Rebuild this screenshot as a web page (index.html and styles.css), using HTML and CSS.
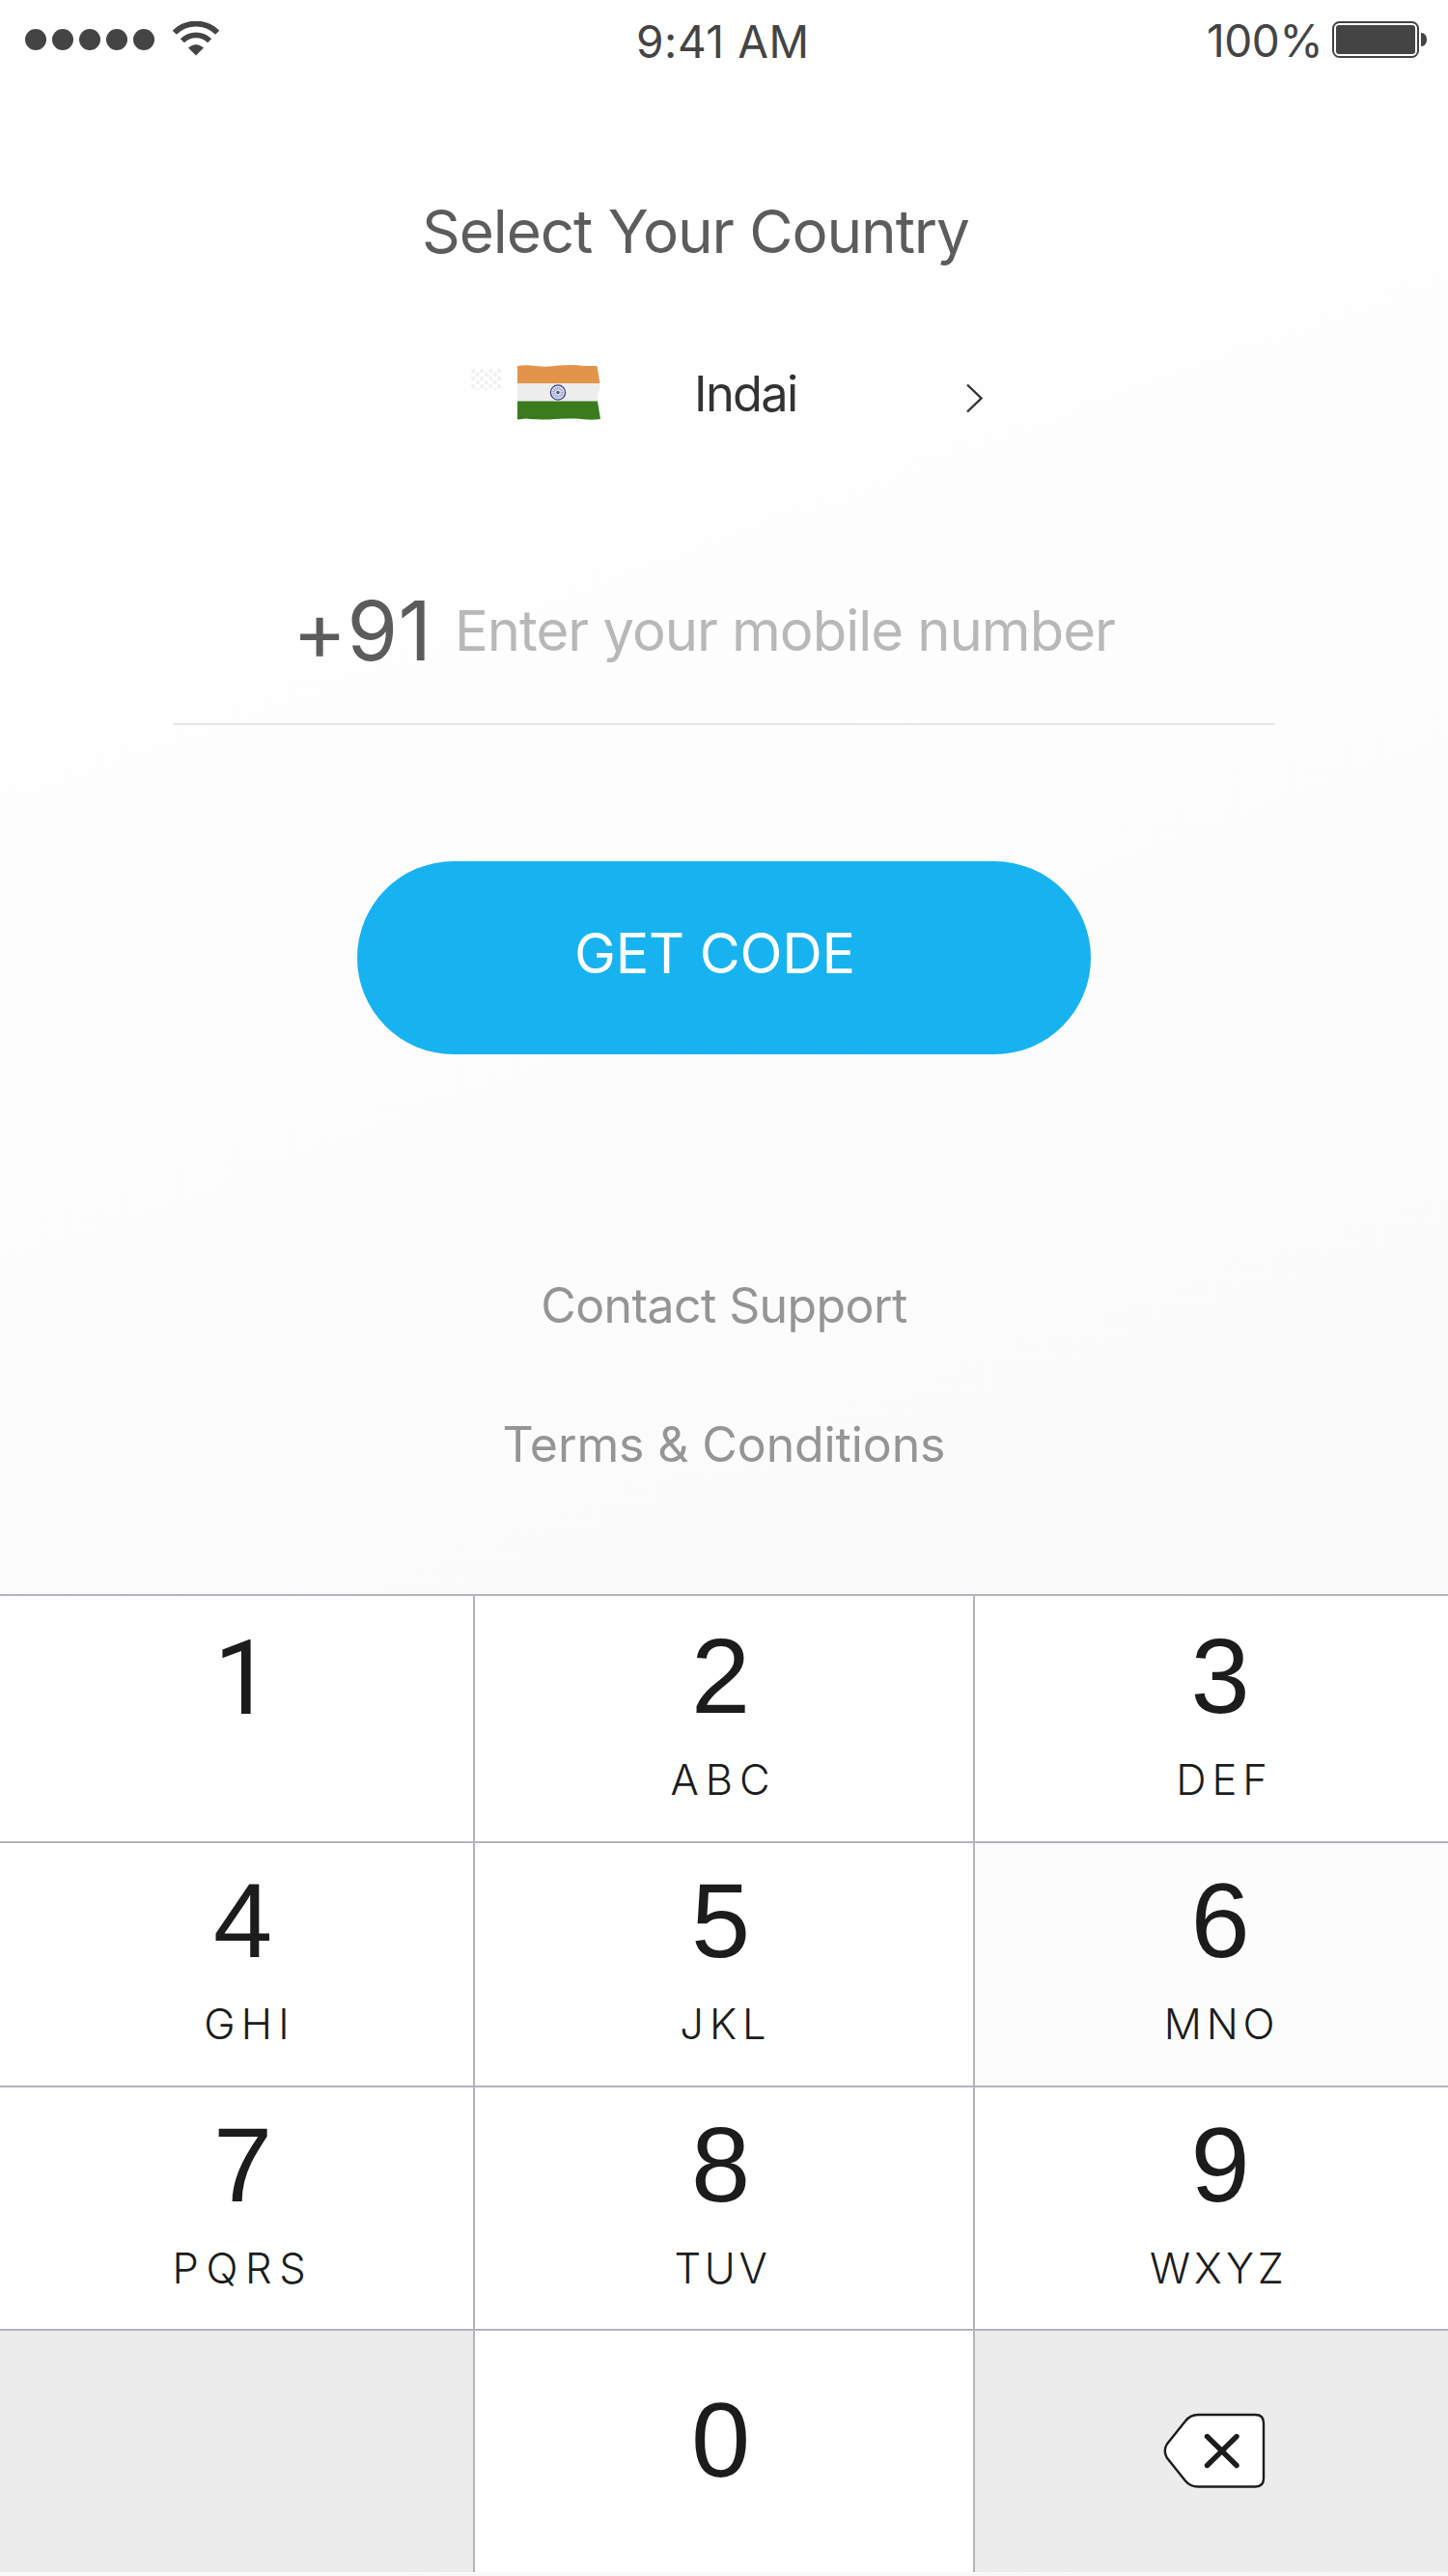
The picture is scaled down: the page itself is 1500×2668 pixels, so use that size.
FILE: index.html
```
<!DOCTYPE html>
<html lang="en">
<head>
<meta charset="utf-8">
<title>Select Your Country</title>
<link rel="stylesheet" href="styles.css">
</head>
<body>
<div class="screen">
  <header class="status">
    <div class="status-left">
      <svg class="signal" width="134" height="22" viewBox="0 0 134 22" fill="#444"><circle cx="11" cy="11" r="11"/><circle cx="39" cy="11" r="11"/><circle cx="67" cy="11" r="11"/><circle cx="95" cy="11" r="11"/><circle cx="123" cy="11" r="11"/></svg>
      <svg class="wifi" width="48" height="36" viewBox="0 0 48 36"><path d="M1.8 11.7A31.5 31.5 0 0 1 46.2 11.7" fill="none" stroke="#444" stroke-width="5.8"/><path d="M9.9 20.2A20 20 0 0 1 38.100 20.2" fill="none" stroke="#444" stroke-width="5.8"/><path d="M16 27.600Q24 20.600 32 27.600L24 35.600Z" fill="#444"/></svg>
    </div>
    <div class="time">9:41 AM</div>
    <div class="status-right">
      <span class="percent">100%</span>
      <svg class="battery" width="98" height="38" viewBox="0 0 98 38"><rect x="1" y="1" width="88" height="36" rx="6.500" fill="none" stroke="#444" stroke-width="2"/><rect x="4" y="4" width="82" height="30" rx="3" fill="#444"/><path d="M92 12c8 0 8 14 0 14Z" fill="#444"/></svg>
    </div>
  </header>

  <main class="form">
    <h1 class="title">Select Your Country</h1>

    <div class="country">
      <svg class="pattern" width="32" height="22" viewBox="0 0 32 22">
        <defs><pattern id="dots" width="9" height="8" patternUnits="userSpaceOnUse"><ellipse cx="2.200" cy="2" rx="2" ry="2.500" fill="#f1f1f1"/><ellipse cx="6.700" cy="6" rx="2" ry="2.500" fill="#f1f1f1"/></pattern></defs>
        <rect width="32" height="22" fill="url(#dots)"/>
      </svg>
      <svg class="flag" width="88" height="60" viewBox="0 0 88 60">
        <path d="M1 2Q10 .5 20 2Q32 3.500 44 1.500Q60 .5 70 2L83.500 2L86.500 20H1Z" fill="#e3944b"/>
        <path d="M1 20H86.500Q87.500 23 85.500 28Q83 32 84.500 38.500H1Z" fill="#ededed"/>
        <path d="M1 38.500H84L87 57Q76 58.500 62 56.500Q48 56 34 57.500Q18 57.500 10 56.500L1 57.500Z" fill="#397b1d"/>
        <circle cx="43" cy="29.500" r="7.600" fill="#e4e5ee" stroke="#2f3f94" stroke-width="1.300"/>
        <circle cx="43" cy="29.500" r="4.300" fill="none" stroke="#9ba3ca" stroke-width="3" stroke-dasharray="1 .7"/>
        <circle cx="43" cy="29.500" r="1.700" fill="#44549f"/>
      </svg>
      <span class="country-name">Indai</span>
      <svg class="chevron" width="19" height="34" viewBox="0 0 19 34"><path d="M2 2.500L16.500 16.500L2 30.500" fill="none" stroke="#333" stroke-width="2.400"/></svg>
    </div>

    <div class="phone">
      <span class="code">+91</span>
      <span class="placeholder">Enter your mobile number</span>
    </div>

    <button class="submit" type="button">GET CODE</button>

    <nav class="links">
      <a class="link contact">Contact Support</a>
      <a class="link terms">Terms &amp; Conditions</a>
    </nav>
  </main>

  <section class="keypad">
    <div class="key"><span class="digit digit-one">1</span></div>
    <div class="key"><span class="digit">2</span><span class="letters abc">ABC</span></div>
    <div class="key"><span class="digit">3</span><span class="letters def">DEF</span></div>
    <div class="key"><span class="digit">4</span><span class="letters ghi">GHI</span></div>
    <div class="key"><span class="digit">5</span><span class="letters jkl">JKL</span></div>
    <div class="key key-tinted"><span class="digit">6</span><span class="letters mno">MNO</span></div>
    <div class="key"><span class="digit">7</span><span class="letters pqrs">PQRS</span></div>
    <div class="key"><span class="digit">8</span><span class="letters tuv">TUV</span></div>
    <div class="key"><span class="digit">9</span><span class="letters wxyz">WXYZ</span></div>
    <div class="key key-blank"></div>
    <div class="key key-zero"><span class="digit">0</span></div>
    <div class="key key-blank key-delete">
      <svg width="106" height="80" viewBox="0 0 106 80"><path d="M36 2H95.500Q104 2 104 10.500V68Q104 76.500 95.500 76.500H36Q28 76.500 23 70.500L3.800 46.500Q-.2 39.200 3.800 32.500L23 8.500Q28 2 36 2Z" fill="#fff" stroke="#1c1c1c" stroke-width="2.400"/><path d="M45.500 24.500L76 54.500M76 24.500L45.500 54.500" fill="none" stroke="#1c1c1c" stroke-width="5.400" stroke-linecap="round"/></svg>
    </div>
  </section>
</div>
</body>
</html>
```
FILE: styles.css
```
body {
  margin: 0;
  font-family: Inter, "Liberation Sans", sans-serif;
  color: #444;
}

.screen {
  width: 1500px;
  height: 2668px;
  display: flex;
  flex-direction: column;
  overflow: hidden;
  background: linear-gradient(160deg, #fff 0%, #fefefe 25%, #fafafa 68%, #f7f7f7 100%);
}

/* Status bar */
.status {
  display: grid;
  grid-template-columns: 659px 591px 1fr;
  height: 82px;
  box-sizing: border-box;
  white-space: nowrap;
}

.status-left {
  display: flex;
  align-items: flex-start;
  padding-left: 26px;
}

.signal { margin-top: 30px; }
.wifi { margin: 22px 0 0 19px; }

.time,
.percent {
  font-size: 46px;
  line-height: 86px;
}

.time { letter-spacing: .59px; }

.percent {
  width: 130px;
  line-height: 84px;
  letter-spacing: -.45px;
}

.status-right { display: flex; }
.battery { margin-top: 22px; }

/* Form */
.form {
  display: flex;
  flex-direction: column;
  height: 1569px;
  white-space: nowrap;
}

.title {
  margin: 118px 0 0 437px;
  font-size: 62px;
  font-weight: 400;
  line-height: 80px;
  letter-spacing: -1.08px;
  color: #5c5c5c;
}

.country {
  display: flex;
  align-items: flex-start;
  height: 60px;
  margin-top: 97px;
  padding-left: 488px;
}

.pattern { margin-top: 5px; }
.flag { margin-left: 15px; }

.country-name {
  width: 281px;
  margin-left: 96px;
  font-size: 50.5px;
  line-height: 62px;
  letter-spacing: -1.67px;
  color: #333;
}

.chevron { margin-top: 19px; }

.phone {
  display: flex;
  align-items: center;
  height: 192px;
  margin: 120px 179px 0;
  padding-left: 124px;
  border-bottom: 2px solid #e6e6e6;
}

.code {
  width: 168px;
  font-size: 85px;
  letter-spacing: .28px;
  color: #5c5c5c;
}

.placeholder {
  font-size: 58px;
  letter-spacing: -1.01px;
  color: #b8b8b8;
}

.submit {
  width: 760px;
  height: 200px;
  margin: 141px 0 0 370px;
  padding: 0 19px 10px 0;
  border: 0;
  border-radius: 100px;
  background: #17b3f1;
  color: #fff;
  font: 400 57.5px Inter, "Liberation Sans", sans-serif;
  letter-spacing: -.25px;
}

.links {
  display: flex;
  flex-direction: column;
  align-items: center;
  gap: 84px;
  margin-top: 230px;
}

.link {
  font-size: 50px;
  line-height: 60px;
  color: #959595;
}

.contact { letter-spacing: -.6px; }
.terms { letter-spacing: -.11px; }

/* Keypad */
.keypad {
  display: grid;
  grid-template-columns: 490px 518px 492px;
  grid-template-rows: 256px 253px 252px 252px;
}

.key {
  display: flex;
  flex-direction: column;
  align-items: center;
  box-sizing: border-box;
  padding-top: 35px;
  border-top: 2px solid #b1b4ba;
  background: #fff;
  color: #1c1c1c;
}

.key:nth-child(-n+3) { padding-top: 38px; }
.key:nth-child(3n+1) { padding-left: 13px; }

.key:nth-child(3n+2) {
  padding-right: 7px;
  border-left: 2px solid #b1b4ba;
}

.key:nth-child(3n) {
  padding-left: 18px;
  border-left: 2px solid #b1b4ba;
}

.key-tinted { background: #fcfcfc; }
.key-blank { background: #ececec; }
.key.key-zero { padding-top: 68px; }

.key.key-delete {
  padding-top: 85px;
  padding-left: 5px;
}

.digit {
  height: 90px;
  font: 110px/90px "Liberation Sans", sans-serif;
}

.digit-one { font: 107px/95px Roboto, sans-serif; }

.letters {
  margin-top: 37px;
  font-size: 43.5px;
  font-weight: 300;
  line-height: 50px;
}

.abc { padding-left: 6px; letter-spacing: 7px; }
.def { padding-left: 9px; letter-spacing: 5.9px; }
.ghi { padding-left: 14px; letter-spacing: 6.2px; }
.jkl { padding-left: 11px; letter-spacing: 6px; }
.mno { padding-left: 3px; letter-spacing: 4.8px; }
.pqrs { letter-spacing: 7.6px; }
.tuv { padding-left: 4px; letter-spacing: 3.6px; }
.wxyz { padding-right: 3px; letter-spacing: 4px; }
```
